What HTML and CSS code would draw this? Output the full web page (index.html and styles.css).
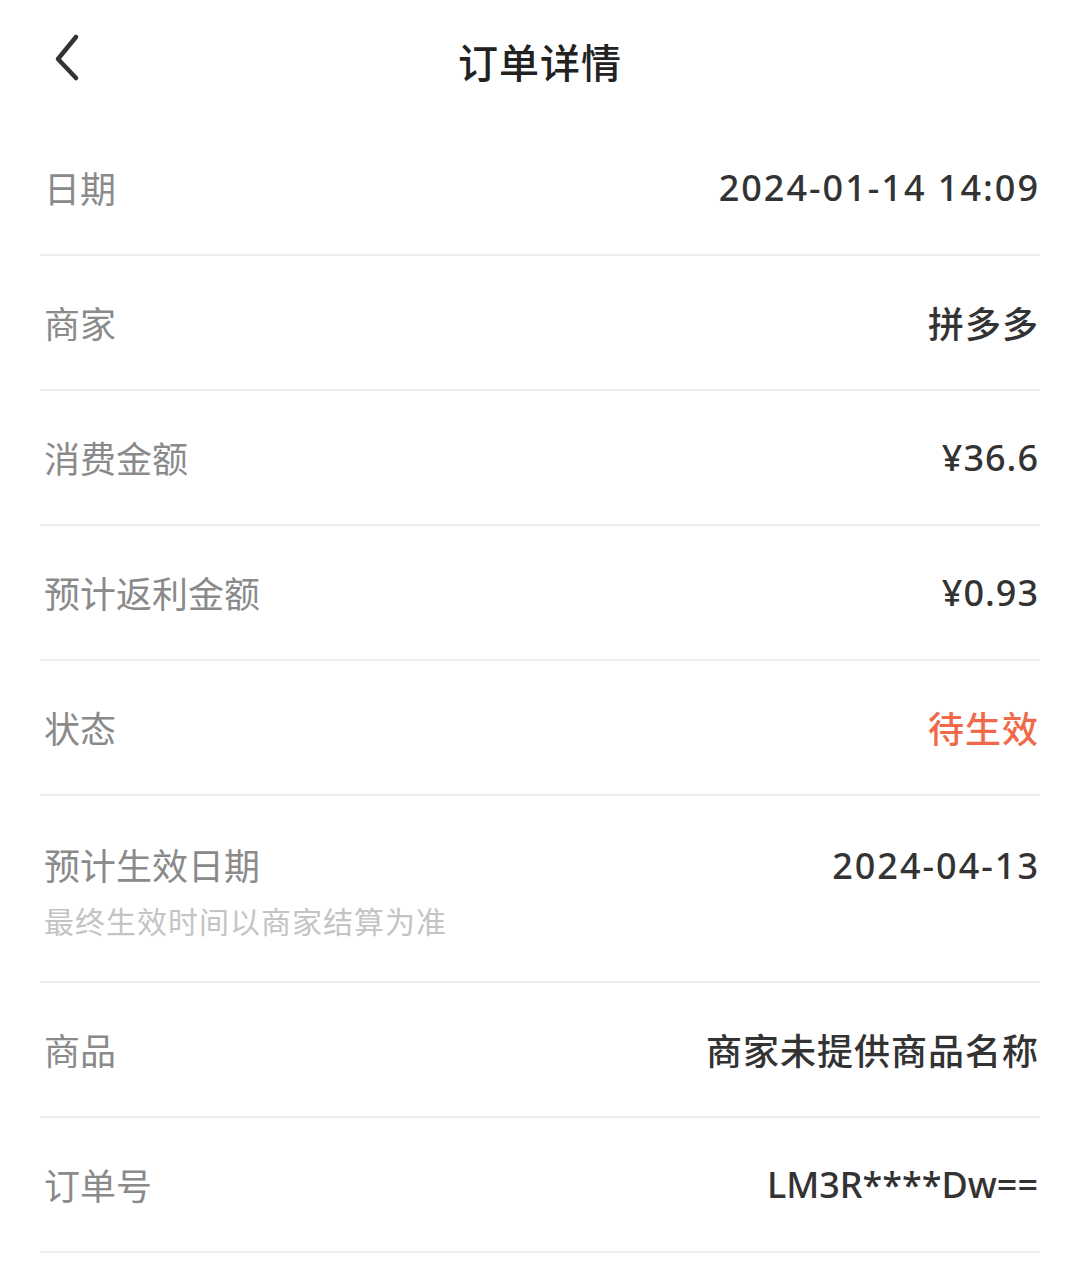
FILE: index.html
```html
<!DOCTYPE html>
<html lang="zh-cn">

<head>
    <meta charset="UTF-8">
    <meta name="viewport" content="width=device-width, initial-scale=1.0">
    <title>订单详情</title>
    <link rel="stylesheet" href="styles.css">
</head>

<body>
    <!-- 顶部标题栏 -->
    <div class="navbar">
        <button class="back">
            <svg width="40" height="60" viewBox="0 0 40 60">
                <path d="M30 15 L12 37 L30 56" fill="none" stroke="#333" stroke-width="4.5" stroke-linecap="round" stroke-linejoin="round" />
            </svg>
        </button>
        <h1>订单详情</h1>
    </div>

    <!-- 订单信息列表 -->
    <div class="detail-list">
        <div class="row">
            <span class="label">日期</span>
            <span class="value num">2024-01-14 14:09</span>
        </div>
        <div class="row">
            <span class="label">商家</span>
            <span class="value cjk">拼多多</span>
        </div>
        <div class="row">
            <span class="label">消费金额</span>
            <span class="value money">¥36.6</span>
        </div>
        <div class="row">
            <span class="label">预计返利金额</span>
            <span class="value money">¥0.93</span>
        </div>
        <div class="row">
            <span class="label">状态</span>
            <span class="value cjk pending">待生效</span>
        </div>
        <div class="row row-tall">
            <div class="label-group">
                <span class="label">预计生效日期</span>
                <span class="hint">最终生效时间以商家结算为准</span>
            </div>
            <span class="value num">2024-04-13</span>
        </div>
        <div class="row">
            <span class="label">商品</span>
            <span class="value cjk">商家未提供商品名称</span>
        </div>
        <div class="row">
            <span class="label">订单号</span>
            <span class="value">LM3R****Dw==</span>
        </div>
    </div>
</body>

</html>
```

FILE: styles.css
```css
/* 页面整体样式 */
body {
    font-family: "Noto Sans", "Noto Sans CJK SC", sans-serif;
    margin: 0;
    padding: 0;
    background-color: #fff;
    color: #333;
}

/* 顶部标题栏 */
.navbar {
    height: 121px;
    display: flex;
    align-items: center;
    justify-content: center;
    position: relative;
}

.navbar h1 {
    margin: 0;
    font-size: 40px;
    font-weight: 500;
    color: #222;
    letter-spacing: 1px;
}

.back {
    position: absolute;
    left: 46px;
    top: 22px;
    padding: 0;
    border: none;
    background: none;
    cursor: pointer;
}

/* 列表 */
.detail-list {
    padding: 0 40px;
}

.row {
    height: 133px;
    display: flex;
    justify-content: space-between;
    align-items: center;
    border-bottom: 2px solid #eee;
    padding: 0 2px 0 4px;
}

.row-tall {
    height: 185px;
}

.label-group {
    display: flex;
    flex-direction: column;
    gap: 7px;
    margin-bottom: -2px;
}

.label {
    font-size: 36px;
    color: #8a8a8a;
}

.hint {
    font-size: 30px;
    color: #c4c4c4;
    letter-spacing: 1px;
}

.value {
    font-size: 36px;
    font-weight: 500;
    color: #333;
}

.num {
    letter-spacing: 2px;
    margin-right: -2px;
}

.money,
.cjk {
    letter-spacing: 1px;
    margin-right: -1px;
}

.row-tall .value {
    align-self: flex-start;
    margin-top: 45px;
}

.pending {
    color: #ef6a4b;
}
```
